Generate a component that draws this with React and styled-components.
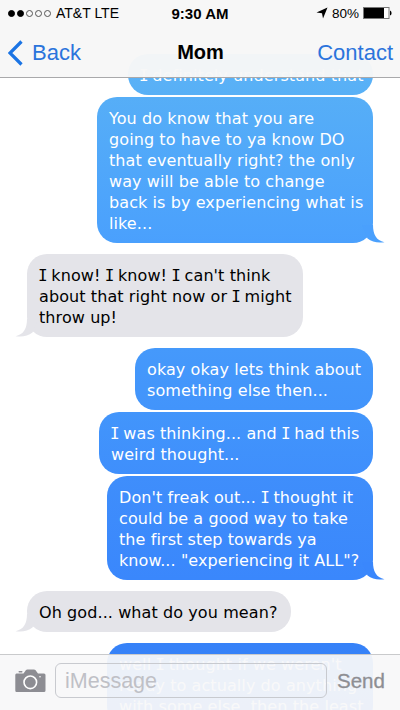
import React from 'react';
import styled, { createGlobalStyle } from 'styled-components';

const messages = [
  { from: 'me', width: 245, color: ['#5cb2f7', '#58b0f6'], gap: 2, lines: ['I definitely understand that'] },
  {
    from: 'me',
    width: 276,
    color: ['#56aef7', '#4aa0fd'],
    gap: 11,
    tail: true,
    lines: [
      'You do know that you are',
      'going to have to ya know DO',
      'that eventually right? the only',
      'way will be able to change',
      'back is by experiencing what is',
      'like...',
    ],
  },
  {
    from: 'mom',
    width: 276,
    gap: 11,
    tail: true,
    lines: ["I know! I know! I can't think", 'about that right now or I might', 'throw up!'],
  },
  {
    from: 'me',
    width: 238,
    color: ['#4599fb', '#4294fb'],
    gap: 2,
    lines: ['okay okay lets think about', 'something else then...'],
  },
  {
    from: 'me',
    width: 274,
    color: ['#4295fb', '#3f8ffc'],
    gap: 2,
    lines: ['I was thinking... and I had this', 'weird thought...'],
  },
  {
    from: 'me',
    width: 266,
    color: ['#3f8efb', '#3a87fc'],
    gap: 11,
    tail: true,
    lines: [
      "Don't freak out... I thought it",
      'could be a good way to take',
      'the first step towards ya',
      'know... "experiencing it ALL"?',
    ],
  },
  { from: 'mom', width: 264, gap: 11, tail: true, lines: ['Oh god... what do you mean?'] },
  {
    from: 'me',
    width: 266,
    color: ['#3682f8', '#327ef8'],
    gap: 0,
    lines: ["well I thought if we weren't", 'ready to actually do anything', 'with some else, then the least'],
  },
];

// the pronoun "I" is set with serifs
const renderLine = (line) => line.split(/\b(I)\b/).map((part, index) => (part === 'I' ? <Pronoun key={index}>I</Pronoun> : part));

function Message({ message }) {
  const { from, width, color, gap, tail, lines } = message;
  return (
    <Bubble $from={from} $width={width} $color={color} $gap={gap}>
      {lines.map((line) => (
        <Line key={line}>{renderLine(line)}</Line>
      ))}
      {tail && (
        <Tail $from={from} viewBox="0 0 23 18">
          <path d="M11 0 C11 9 14 15.5 22.5 17.2 C16 18.2 10 17.2 5.5 13.5 L0 0 Z" fill={from === 'me' ? color[1] : '#e4e4e9'} />
        </Tail>
      )}
    </Bubble>
  );
}

function App() {
  return (
    <Phone>
      <GlobalStyle />
      <Conversation>
        {messages.map((message) => (
          <Message key={message.lines[0]} message={message} />
        ))}
      </Conversation>
      <Header>
        <StatusBar>
          <Signal>
            <Dot $filled />
            <Dot $filled />
            <Dot />
            <Dot />
            <Dot />
            <Carrier>AT&amp;T LTE</Carrier>
          </Signal>
          <Clock>9:30 AM</Clock>
          <Power>
            <svg width="12" height="12" viewBox="0 0 12 12">
              <path d="M11.5 0.5 L7 11.5 L6 6.2 L0.5 5.4 Z" fill="#000" />
            </svg>
            <span>80%</span>
            <svg width="29" height="12" viewBox="0 0 29 12">
              <rect x="0.5" y="0.5" width="25.5" height="11" fill="#fff" stroke="#777" />
              <rect x="1" y="1" width="20" height="10" fill="#000" />
              <path d="M27 3.5 Q28.6 4 28.6 6 Q28.6 8 27 8.5 Z" fill="#000" />
            </svg>
          </Power>
        </StatusBar>
        <NavBar>
          <BackButton>
            <svg width="16" height="26" viewBox="0 0 16 26">
              <path d="M13.5 1.5 L2 13 L13.5 24.5" fill="none" stroke="#1b74e4" strokeWidth="3.2" />
            </svg>
            Back
          </BackButton>
          <Title>Mom</Title>
          <ContactButton>Contact</ContactButton>
        </NavBar>
      </Header>
      <Composer>
        <Camera width="31" height="24" viewBox="0 0 31 24">
          <path
            d="M1.5 4.5 H8.5 L11 1 Q11.5 0.4 12.4 0.4 H19 Q19.8 0.4 20.4 1 L23 4.5 H29 Q30.5 4.5 30.5 6 V21.5 Q30.5 23 29 23 H1.5 Q0.3 23 0.3 21.5 V6 Q0.3 4.5 1.5 4.5 Z"
            fill="#8d8d93"
          />
          <rect x="3.5" y="2" width="4" height="1.5" rx="0.7" fill="#8d8d93" />
          <circle cx="15.3" cy="13.3" r="6.3" fill="none" stroke="#fff" strokeWidth="1.6" />
          <circle cx="25" cy="7.8" r="0.8" fill="#fff" />
        </Camera>
        <Field>iMessage</Field>
        <SendButton>Send</SendButton>
      </Composer>
    </Phone>
  );
}

export default App;

const GlobalStyle = createGlobalStyle`
  body {
    margin: 0;
    background: #fff;
  }
`;

const Phone = styled.div`
  position: relative;
  width: 400px;
  height: 710px;
  overflow: hidden;
  background: #fff;
  font-family: 'Liberation Sans', Arial, sans-serif;
`;

const Conversation = styled.div`
  display: flex;
  flex-direction: column;
  padding: 54px 27px 0;
`;

const Bubble = styled.div`
  position: relative;
  box-sizing: border-box;
  width: ${(props) => props.$width}px;
  flex-shrink: 0;
  margin-bottom: ${(props) => props.$gap}px;
  padding: 11px 12px 9px;
  border-radius: 20px;
  align-self: ${(props) => (props.$from === 'me' ? 'flex-end' : 'flex-start')};
  color: ${(props) => (props.$from === 'me' ? '#fff' : '#000')};
  background: ${(props) =>
    props.$from === 'me' ? `linear-gradient(${props.$color[0]}, ${props.$color[1]})` : '#e4e4e9'};
  font-family: 'DejaVu Sans', Verdana, sans-serif;
  font-size: 16px;
  letter-spacing: 0.09px;
`;

const Line = styled.div`
  height: 21px;
  line-height: 21px;
  white-space: nowrap;
`;

const Pronoun = styled.span`
  margin: 0 -1.6px 0 -1px;
  font-family: 'DejaVu Sans Mono', monospace;
`;

const Tail = styled.svg`
  position: absolute;
  bottom: 0;
  width: 23px;
  height: 18px;
  ${(props) => (props.$from === 'me' ? 'right: -12px;' : 'left: -12px; transform: scaleX(-1);')}
`;

const Header = styled.header`
  position: absolute;
  top: 0;
  left: 0;
  right: 0;
  height: 77px;
  background: rgba(247, 247, 247, 0.97);
  border-bottom: 1px solid #a9a9ab;
`;

const StatusBar = styled.div`
  display: grid;
  grid-template-columns: 1fr auto 1fr;
  align-items: center;
  height: 26px;
  padding: 0 8px;
  font-size: 13.5px;
`;

const Signal = styled.div`
  display: flex;
  align-items: center;
  gap: 2px;
`;

const Dot = styled.span`
  box-sizing: border-box;
  width: 7px;
  height: 7px;
  border: 1px solid ${(props) => (props.$filled ? '#000' : '#555')};
  border-radius: 50%;
  background: ${(props) => (props.$filled ? '#000' : 'transparent')};
`;

const Carrier = styled.span`
  margin-left: 3px;
  font-size: 14px;
`;

const Clock = styled.span`
  font-size: 15px;
  font-weight: 700;
`;

const Power = styled.div`
  display: flex;
  align-items: center;
  justify-content: flex-end;
  gap: 4px;
`;

const NavBar = styled.nav`
  display: grid;
  grid-template-columns: 1fr auto 1fr;
  align-items: center;
  height: 53px;
  padding: 0 7px 0 8px;
`;

const BackButton = styled.div`
  display: flex;
  align-items: center;
  gap: 8px;
  color: #2b74dc;
  font-size: 22px;
`;

const Title = styled.div`
  font-size: 20px;
  font-weight: 700;
`;

const ContactButton = styled.div`
  justify-self: end;
  color: #2b74dc;
  font-size: 22px;
`;

const Composer = styled.footer`
  position: absolute;
  right: 0;
  bottom: 0;
  left: 0;
  display: flex;
  align-items: center;
  box-sizing: border-box;
  height: 56px;
  padding: 0 15px 4px;
  border-top: 1px solid #c9cacc;
  background: rgba(248, 248, 249, 0.94);
`;

const Camera = styled.svg`
  flex: none;
`;

const Field = styled.div`
  box-sizing: border-box;
  flex: none;
  width: 272px;
  height: 35px;
  margin-left: 9px;
  padding-left: 9px;
  border: 1px solid #c8cacf;
  border-radius: 6px;
  color: #bfc0c6;
  font-size: 21.5px;
  line-height: 34px;
`;

const SendButton = styled.div`
  margin-left: 10px;
  color: #8e8e93;
  font-size: 20.5px;
  -webkit-text-stroke: 0.3px #8e8e93;
`;
